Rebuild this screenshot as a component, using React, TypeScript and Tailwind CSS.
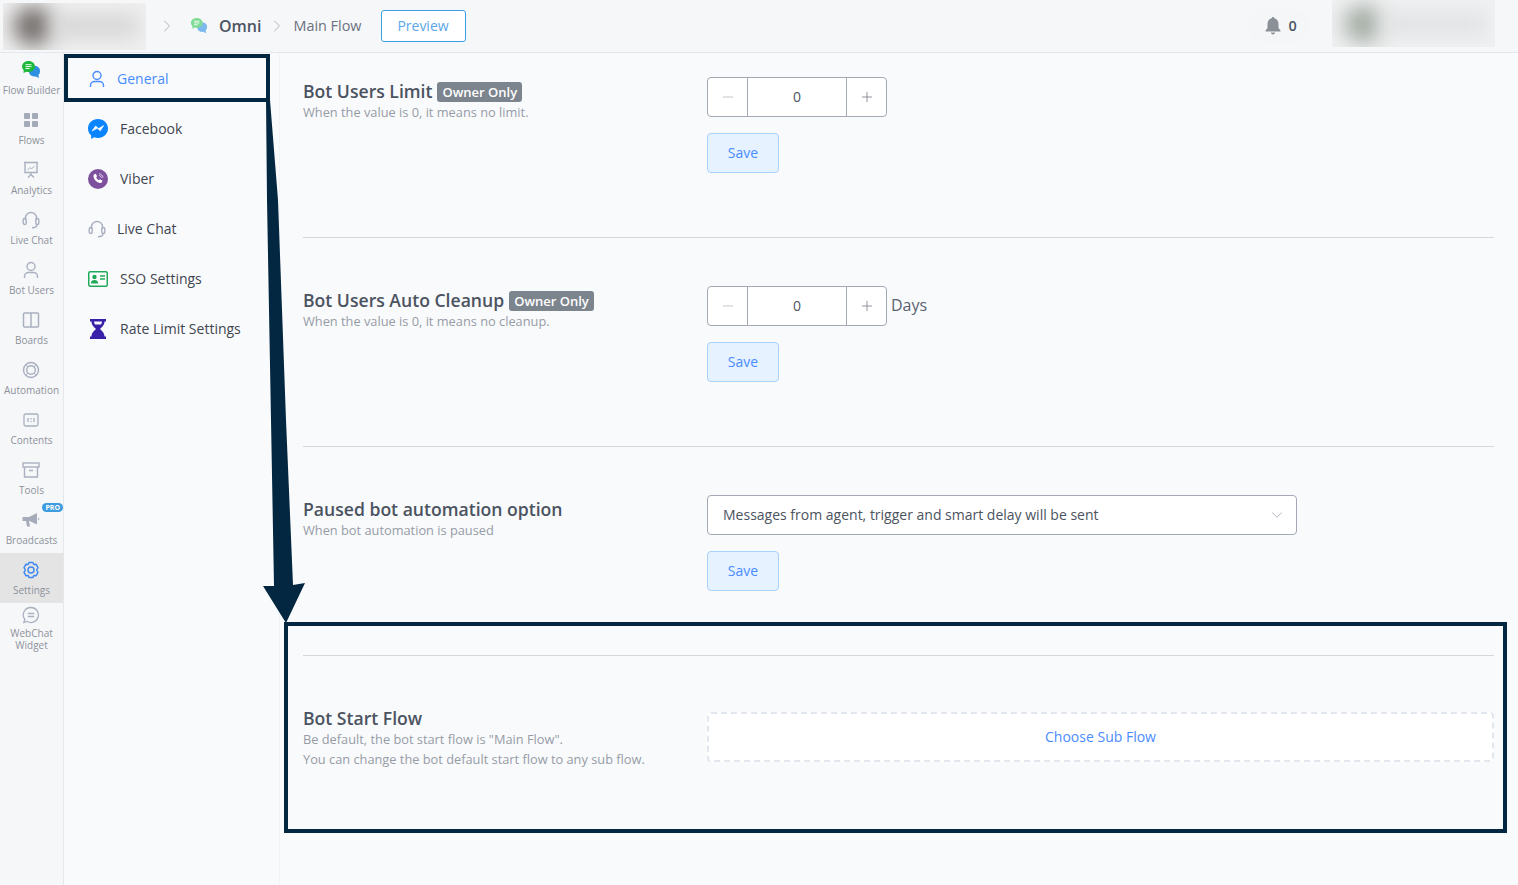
import type { ReactNode } from 'react'
import { ChevronDown, ChevronRight, Minus, Plus } from 'lucide-react'

function ChatsIcon({ green, blue, size = 20 }: { green: string; blue: string; size?: number }) {
  return (
    <svg width={size} height={size} viewBox="0 0 20 20">
      <path d="M9 7a6 6 0 0 1 6-1c3 .8 4.500 3 4 6-.2 1.300-.8 2.300-1.600 3l.6 3-3.300-1.500c-3 .5-6-1-6.700-4-.2-1.800.2-4 1-5.500z" fill={blue} />
      <path d="M7.500 1C11.500 1 14 3.500 14 6.500S11.500 12 7.500 12c-.8 0-1.500-.1-2.200-.3L2.500 13l.2-3C1.600 9 1 7.800 1 6.500 1 3.500 3.500 1 7.500 1z" fill={green} />
      <path d="M4.500 4.700h6M4.500 6.600h6M4.500 8.500h4" stroke="#fff" strokeWidth="0.9" />
    </svg>
  )
}

function GridIcon() {
  return (
    <svg width="16" height="16" viewBox="0 0 16 16" fill="#a5abb8">
      <rect x="1" y="1" width="6" height="6" rx="0.8" />
      <rect x="9" y="1" width="6" height="6" rx="0.8" />
      <rect x="1" y="9" width="6" height="6" rx="0.8" />
      <rect x="9" y="9" width="6" height="6" rx="0.8" />
    </svg>
  )
}

function BoardIcon() {
  return (
    <svg width="18" height="18" viewBox="0 0 18 18" fill="none" stroke="#a9b0c0" strokeWidth="1.400">
      <path d="M2 1.500h14M3 1.500v10h12v-10M9 11.500v2M6 16.500l3-3 3 3" />
      <path d="M5.500 9l2.500-2.500 1.500 1.500 3-3" strokeWidth="1" />
    </svg>
  )
}

function HeadsetIcon({ size = 18 }: { size?: number }) {
  return (
    <svg width={size} height={size} viewBox="0 0 18 18" fill="none" stroke="#a9b0c0" strokeWidth="1.400">
      <path d="M3.500 9V7a5.500 5.500 0 0 1 11 0v2" />
      <rect x="1.200" y="7.500" width="3" height="6" rx="1.500" />
      <rect x="13.800" y="7.500" width="3" height="6" rx="1.500" />
      <path d="M15 13.500c0 2.200-2 3.200-5 3.200" />
    </svg>
  )
}

function UserIcon({ color = '#a9b0c0' }: { color?: string }) {
  return (
    <svg width="18" height="18" viewBox="0 0 18 18" fill="none" stroke={color} strokeWidth="1.400">
      <circle cx="9" cy="5.500" r="4" />
      <path d="M2.500 17v-1.500c0-2.500 2-4 4-4h5c2 0 4 1.500 4 4V17" />
    </svg>
  )
}

function BoardsIcon() {
  return (
    <svg width="18" height="18" viewBox="0 0 18 18" fill="none" stroke="#a9b0c0" strokeWidth="1.500">
      <rect x="1.500" y="2" width="15" height="14" rx="1" />
      <path d="M9 2v14" />
    </svg>
  )
}

function RingIcon() {
  return (
    <svg width="18" height="18" viewBox="0 0 18 18" fill="none" stroke="#a9b0c0" strokeWidth="1.400">
      <circle cx="9" cy="9" r="7.500" />
      <circle cx="9" cy="9" r="4.300" />
      <path d="M4 4l2 2M14 4l-2 2M4 14l2-2M14 14l-2-2" strokeWidth="1" />
    </svg>
  )
}

function ContentsIcon() {
  return (
    <svg width="18" height="18" viewBox="0 0 18 18" fill="none" stroke="#a9b0c0" strokeWidth="1.300">
      <rect x="2" y="3" width="14" height="12" rx="1.500" />
      <path d="M6 7v4M9 7v1.500M9 10v1M12 7v4" />
    </svg>
  )
}

function ToolsIcon() {
  return (
    <svg width="18" height="18" viewBox="0 0 18 18" fill="none" stroke="#a9b0c0" strokeWidth="1.400">
      <rect x="1" y="2" width="16" height="4" />
      <path d="M2.500 6v10h13V6M7 9.500h4" />
    </svg>
  )
}

function MegaphoneIcon() {
  return (
    <svg width="18" height="18" viewBox="0 0 18 18" fill="#a5abb8">
      <path d="M0.500 6h6.500L15 2v11.500L7.500 10H7l1 5.500H5L4 10H0.500z" />
      <path d="M16 6.500l1.500 1.500L16 9.500z" />
    </svg>
  )
}

function GearIcon() {
  return (
    <svg width="18" height="18" viewBox="0 0 18 18" fill="none" stroke="#3d87f5" strokeWidth="1.400" strokeLinejoin="round">
      <path d="M7 1.500h4l.8 2 2.200-.3 2 3.400L14.600 9 16 11.400l-2 3.400-2.200-.3-.8 2H7l-.8-2-2.200.3-2-3.400L3.400 9 2 6.600l2-3.400 2.200.3z" />
      <circle cx="9" cy="9" r="3" />
    </svg>
  )
}

function WebChatIcon() {
  return (
    <svg width="18" height="18" viewBox="0 0 18 18" fill="none" stroke="#a9b0c0" strokeWidth="1.300">
      <path d="M9 1.500a7.500 7.500 0 1 1-3.800 14L1.800 16.500l1-3A7.500 7.500 0 0 1 9 1.500z" />
      <path d="M5.800 7.500h6.400M5.800 10.500h6.400" />
    </svg>
  )
}

function MessengerIcon() {
  return (
    <svg width="20" height="20" viewBox="0 0 20 20">
      <path d="M10 0C4.400 0 0 4.100 0 9.500c0 2.900 1.200 5.300 3.200 7V20l3-1.700c1.200.4 2.500.6 3.800.6 5.600 0 10-4.100 10-9.400S15.600 0 10 0z" fill="#0a84ff" />
      <path d="M4 12l3.600-5 3 2.500L15.800 6.500 12.300 11.800 9.300 9.300z" fill="#fff" stroke="#fff" strokeWidth="0.6" strokeLinejoin="round" />
    </svg>
  )
}

function ViberIcon() {
  return (
    <svg width="20" height="20" viewBox="0 0 20 20">
      <circle cx="10" cy="10" r="10" fill="#7d519e" />
      <path d="M6.300 5.200l1.500-.4 1.300 2.500-.9 1c.5 1.300 1.500 2.300 2.800 2.900l1-1 2.400 1.300-.4 1.500c-.4.800-1.300 1.200-2.200.9C8.700 13.600 6.500 11.300 5.500 7.700c-.2-1 .1-1.900.8-2.500z" fill="#fff" />
      <path d="M11 4.800c2.200.2 3.800 1.800 4 4M11 6.500c1.200.1 2.100 1 2.300 2.300" stroke="#fff" strokeWidth="0.7" fill="none" />
    </svg>
  )
}

function SsoIcon() {
  return (
    <svg width="20" height="16" viewBox="0 0 20 16">
      <rect x="0.750" y="0.750" width="18.500" height="14.500" rx="1.500" fill="#fff" stroke="#21a95a" strokeWidth="1.500" />
      <circle cx="6.500" cy="6" r="2.200" fill="#21a95a" />
      <path d="M2.800 12.500c0-2.500 1.500-3.500 3.700-3.500s3.700 1 3.700 3.500z" fill="#21a95a" />
      <path d="M12 5h5M12 8h5" stroke="#21a95a" strokeWidth="1.300" />
    </svg>
  )
}

function HourglassIcon() {
  return (
    <svg width="16" height="20" viewBox="0 0 16 20" fill="#3a1fa8">
      <path d="M0 0h16v2.500h-1.500c0 3.500-2.500 5.500-4.500 7.500 2 2 4.500 4 4.500 7.500H16V20H0v-2.500h1.500C1.500 14 4 12 6 10 4 8 1.500 6 1.500 2.500H0zM4 2.500c0 1 .4 2 1 3h6c.6-1 1-2 1-3z" />
    </svg>
  )
}

const railItems: { label: string; icon: ReactNode; active?: boolean; pro?: boolean }[] = [
  { label: 'Flow Builder', icon: <ChatsIcon green="#1db93c" blue="#2f8fe0" /> },
  { label: 'Flows', icon: <GridIcon /> },
  { label: 'Analytics', icon: <BoardIcon /> },
  { label: 'Live Chat', icon: <HeadsetIcon /> },
  { label: 'Bot Users', icon: <UserIcon /> },
  { label: 'Boards', icon: <BoardsIcon /> },
  { label: 'Automation', icon: <RingIcon /> },
  { label: 'Contents', icon: <ContentsIcon /> },
  { label: 'Tools', icon: <ToolsIcon /> },
  { label: 'Broadcasts', icon: <MegaphoneIcon />, pro: true },
  { label: 'Settings', icon: <GearIcon />, active: true },
]

function Rail() {
  return (
    <nav className="w-[64px] shrink-0 border-r border-[#e4e7ec] bg-[#f6f7f9]">
      {railItems.map((item) => (
        <div
          key={item.label}
          className={`relative flex h-[50px] flex-col items-center pt-[7px] ${item.active ? 'bg-[#e4e4e4]' : ''}`}
        >
          <div className="flex h-[20px] items-center justify-center pr-px">{item.icon}</div>
          <span className="mt-[3px] whitespace-nowrap text-[10px] leading-[14px] text-[#8d929b]">{item.label}</span>
          {item.pro && (
            <span className="absolute right-[0px] top-[0px] rounded-full bg-[#3d9be0] px-[3px] text-[7px] font-bold leading-[9px] text-white">
              PRO
            </span>
          )}
        </div>
      ))}
      <div className="flex flex-col items-center pt-[3px]">
        <div className="pr-px">
          <WebChatIcon />
        </div>
        <span className="mt-[3px] text-center text-[10px] leading-[12px] text-[#8d929b]">
          WebChat
          <br />
          Widget
        </span>
      </div>
    </nav>
  )
}

const menuItems: { label: string; icon: ReactNode; active?: boolean; narrow?: boolean }[] = [
  { label: 'General', icon: <UserIcon color="#4a8cff" />, active: true, narrow: true },
  { label: 'Facebook', icon: <MessengerIcon /> },
  { label: 'Viber', icon: <ViberIcon /> },
  { label: 'Live Chat', icon: <HeadsetIcon />, narrow: true },
  { label: 'SSO Settings', icon: <SsoIcon /> },
  { label: 'Rate Limit Settings', icon: <div className="flex w-[20px] justify-center"><HourglassIcon /></div> },
]

function SubMenu() {
  return (
    <aside className="w-[216px] shrink-0 border-r border-[#f3f4f7] pt-[1px]">
      {menuItems.map((item) => (
        <div key={item.label} className="flex h-[50px] items-center pl-6">
          <div className={`flex items-center ${item.narrow ? 'w-[29px]' : 'w-[32px]'}`}>{item.icon}</div>
          <span className={`text-sm ${item.active ? 'text-[#4a8cff]' : 'text-[#3f4650]'}`}>{item.label}</span>
        </div>
      ))}
    </aside>
  )
}

function Stepper({ suffix }: { suffix?: string }) {
  return (
    <div className="flex items-center">
      <div className="flex h-10 w-[180px] overflow-hidden rounded border border-[#a2a8b4] bg-white">
        <div className="flex w-[40px] items-center justify-center border-r border-[#a2a8b4] text-[#b4b9c2]">
          <Minus className="h-4 w-4" strokeWidth={1.2} />
        </div>
        <div className="flex flex-1 items-center justify-center text-sm text-[#4b5563]">0</div>
        <div className="flex w-[40px] items-center justify-center border-l border-[#a2a8b4] text-[#767c88]">
          <Plus className="h-4 w-4" strokeWidth={1.2} />
        </div>
      </div>
      {suffix && <span className="mb-[2px] ml-1 text-base text-[#5b6270]">{suffix}</span>}
    </div>
  )
}

function SaveButton() {
  return (
    <button className="mt-4 block h-10 w-[72px] rounded border border-[#a6d2fb] bg-[#e6f2ff] text-sm text-[#4a8cff]">
      Save
    </button>
  )
}

function Heading({ title, owner, children }: { title: string; owner?: boolean; children: ReactNode }) {
  return (
    <div className="w-[404px] shrink-0 pt-[2px]">
      <div className="flex h-6 items-center">
        <h3 className="text-[17.6px] font-semibold leading-6 text-[#4b5360]">{title}</h3>
        {owner && (
          <span className="ml-[5px] mt-[1px] rounded-[3px] bg-[#7c848d] px-[5px] text-[13px] font-semibold leading-[20px] text-white">
            Owner Only
          </span>
        )}
      </div>
      <div className="-mt-px text-[12.8px] leading-5 text-[#969ca6]">{children}</div>
    </div>
  )
}

function Annotations() {
  return (
    <>
      <div className="absolute left-[64px] top-[54px] h-[48px] w-[206px] border-4 border-[#032741]" />
      <div className="absolute left-[284px] top-[622px] h-[211px] w-[1223px] border-4 border-[#032741]" />
      <svg className="absolute left-0 top-0" width="320" height="640" viewBox="0 0 320 640">
        <polygon
          points="266,100 270,100 278,200 286,420 293,585 305,583 286,623 263,586 274,586 271,420 267,200"
          fill="#032741"
        />
      </svg>
    </>
  )
}

export default function App() {
  return (
    <div className="relative flex h-[885px] w-[1518px] flex-col overflow-hidden bg-[#f9fafc] font-['Open_Sans',sans-serif]">
      <header className="flex h-[53px] shrink-0 items-center border-b border-[#e4e7ee] bg-[#f6f7f9]">
        <div className="ml-[3px] flex h-[47px] w-[143px] items-center overflow-hidden bg-[#f0f0f0] pl-[10px] pr-[8px]">
          <div className="h-[40px] w-[40px] shrink-0 rounded-full bg-[#75706e] blur-[10px]" />
          <div className="h-[24px] flex-1 bg-[#d6d6d6] blur-[10px]" />
        </div>
        <ChevronRight className="ml-[11px] h-5 w-5 text-[#b0b5bd]" strokeWidth={1.2} />
        <div className="ml-[13px]">
          <ChatsIcon green="#7fdc95" blue="#7cb9ec" size={18} />
        </div>
        <span className="ml-[11px] text-base font-semibold text-[#4b5563]">Omni</span>
        <ChevronRight className="ml-[6px] h-5 w-5 text-[#b0b5bd]" strokeWidth={1.2} />
        <span className="ml-[6px] text-[14.4px] text-[#6b7280]">Main Flow</span>
        <button className="ml-[19px] h-[32px] w-[85px] rounded-[3px] border border-[#3aa0e6] bg-white text-sm text-[#5aa6e8]">
          Preview
        </button>
        <div className="ml-auto flex h-[34px] w-[62px] items-center justify-center gap-[7px] rounded-full bg-[#f5f6f8] pl-[4px]">
          <svg width="16" height="18" viewBox="0 0 16 18" fill="#8b9096">
            <path d="M8 0c.8 0 1.200.5 1.300 1.200C12 1.800 13.500 4 13.500 7v4l2 2.500v1H.5v-1l2-2.500V7c0-3 1.500-5.200 4.200-5.800C6.800.5 7.200 0 8 0z" />
            <path d="M6 15.500h4c0 1-.8 2-2 2s-2-1-2-2z" />
          </svg>
          <span className="text-[14.4px] font-semibold text-[#4b5563]">0</span>
        </div>
        <div className="ml-[22px] mr-[23px] flex h-[47px] w-[163px] items-center self-start overflow-hidden bg-[#f0f1f2] pl-[12px] pr-[8px]">
          <div className="h-[38px] w-[38px] shrink-0 rounded-full bg-[#a4aca4] blur-[10px]" />
          <div className="h-[22px] flex-1 bg-[#e0e2e3] blur-[10px]" />
        </div>
      </header>

      <div className="flex flex-1">
        <Rail />
        <SubMenu />
        <main className="flex-1 pl-[23px] pr-6 pt-6">
          <section className="mb-12 flex border-b border-[#d5d7db] pb-16">
            <Heading title="Bot Users Limit" owner>
              When the value is 0, it means no limit.
            </Heading>
            <div>
              <Stepper />
              <SaveButton />
            </div>
          </section>

          <section className="mb-12 flex border-b border-[#d5d7db] pb-16">
            <Heading title="Bot Users Auto Cleanup" owner>
              When the value is 0, it means no cleanup.
            </Heading>
            <div>
              <Stepper suffix="Days" />
              <SaveButton />
            </div>
          </section>

          <section className="mb-12 flex border-b border-[#d5d7db] pb-16">
            <Heading title="Paused bot automation option">When bot automation is paused</Heading>
            <div>
              <div className="flex h-10 w-[590px] items-center justify-between rounded border border-[#a2a8b4] bg-white pl-[15px] pr-[10px] text-sm text-[#4b5360]">
                <span>Messages from agent, trigger and smart delay will be sent</span>
                <ChevronDown className="h-[18px] w-[18px] text-[#a9afba]" strokeWidth={1.2} />
              </div>
              <SaveButton />
            </div>
          </section>

          <section className="flex">
            <Heading title="Bot Start Flow">
              Be default, the bot start flow is "Main Flow".
              <br />
              You can change the bot default start flow to any sub flow.
            </Heading>
            <div className="mt-2 flex h-[50px] flex-1 items-center justify-center rounded border-2 border-dashed border-[#e2e6ee] bg-white text-sm text-[#4a8cff]">
              Choose Sub Flow
            </div>
          </section>
        </main>
      </div>

      <Annotations />
    </div>
  )
}
